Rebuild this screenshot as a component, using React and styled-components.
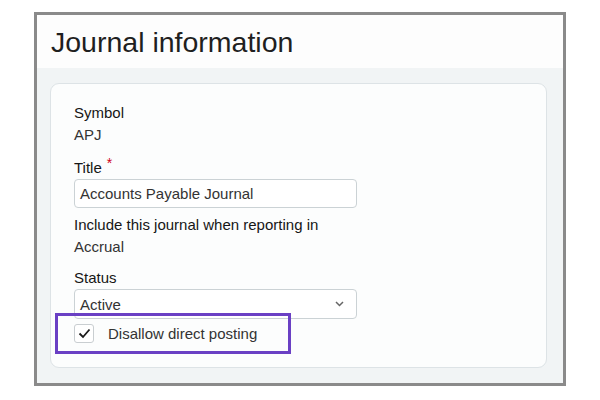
import React from "react";
import styled, { createGlobalStyle } from "styled-components";

const Global = createGlobalStyle`
  html, body { margin: 0; padding: 0; background: #ffffff; }
  body { font-family: "Liberation Sans", Arial, sans-serif; }
  * { box-sizing: border-box; }
`;

const Page = styled.div`
  width: 600px;
  height: 400px;
  padding: 12px 34px 14px 34px;
  background: #ffffff;
`;

const Frame = styled.div`
  width: 532px;
  height: 374px;
  border: 3px solid #8a8a8a;
  display: flex;
  flex-direction: column;
  background: #f1f4f5;
`;

const Header = styled.div`
  height: 53px;
  background: #fdfdfd;
  padding-left: 14px;
  display: flex;
  align-items: center;
`;

const Heading = styled.h1`
  margin: 0;
  font-size: 28.5px;
  font-weight: 400;
  line-height: 53px;
  color: #1f1f1f;
  padding-top: 1px;
`;

const Body = styled.div`
  flex: 1;
  padding: 15px 16px 17px 13px;
  display: flex;
`;

const Card = styled.div`
  flex: 1;
  background: #fcfdfd;
  border: 1px solid #dde3e6;
  border-radius: 9px;
  padding: 18px 24px 13px 23px;
  display: flex;
  flex-direction: column;
`;

const Label = styled.div`
  font-size: 15px;
  line-height: 22px;
  color: #161616;
  margin-top: ${(p) => p.$mt || 0}px;
`;

const Value = styled.div`
  font-size: 15px;
  line-height: 22px;
  color: #333;
`;

const Required = styled.span`
  color: #d0021b;
  font-size: 14px;
  margin-left: 5px;
  position: relative;
  top: -5px;
`;

const TextInput = styled.div`
  width: 283px;
  height: 29px;
  border: 1.5px solid #cbd2d5;
  border-radius: 4px;
  background: #ffffff;
  padding: 0 5px;
  display: flex;
  align-items: center;
  font-size: 15px;
  color: #333;
`;

const Select = styled(TextInput)`
  height: 30px;
  justify-content: space-between;
  padding-right: 12px;
`;

const Highlight = styled.div`
  width: 236px;
  height: 41px;
  margin-left: -19px;
  margin-top: -6px;
  border: 3px solid #6a40c4;
  padding-left: 16px;
  display: flex;
  align-items: center;
  gap: 14px;
`;

const Box = styled.div`
  width: 20px;
  height: 19px;
  border: 1.5px solid #c9ced1;
  border-radius: 3px;
  background: #fff;
  display: flex;
  align-items: center;
  justify-content: center;
`;

const CheckText = styled.span`
  font-size: 15px;
  color: #333;
`;

export default function App() {
  return (
    <>
      <Global />
      <Page>
        <Frame>
          <Header>
            <Heading>Journal information</Heading>
          </Header>
          <Body>
            <Card>
              <Label>Symbol</Label>
              <Value>APJ</Value>
              <Label $mt={11}>
                Title<Required>*</Required>
              </Label>
              <TextInput>Accounts Payable Journal</TextInput>
              <Label $mt={6}>Include this journal when reporting in</Label>
              <Value>Accrual</Value>
              <Label $mt={9}>Status</Label>
              <Select>
                <span>Active</span>
                <svg width="9" height="6" viewBox="0 0 9 6">
                  <path d="M1 1l3.5 3.5L8 1" fill="none" stroke="#666" strokeWidth="1.5" />
                </svg>
              </Select>
              <Highlight>
                <Box>
                  <svg width="13" height="11" viewBox="0 0 13 11">
                    <path d="M1.5 5.5l3.5 3.5L11.5 1.5" fill="none" stroke="#1a1a1a" strokeWidth="1.8" />
                  </svg>
                </Box>
                <CheckText>Disallow direct posting</CheckText>
              </Highlight>
            </Card>
          </Body>
        </Frame>
      </Page>
    </>
  );
}
